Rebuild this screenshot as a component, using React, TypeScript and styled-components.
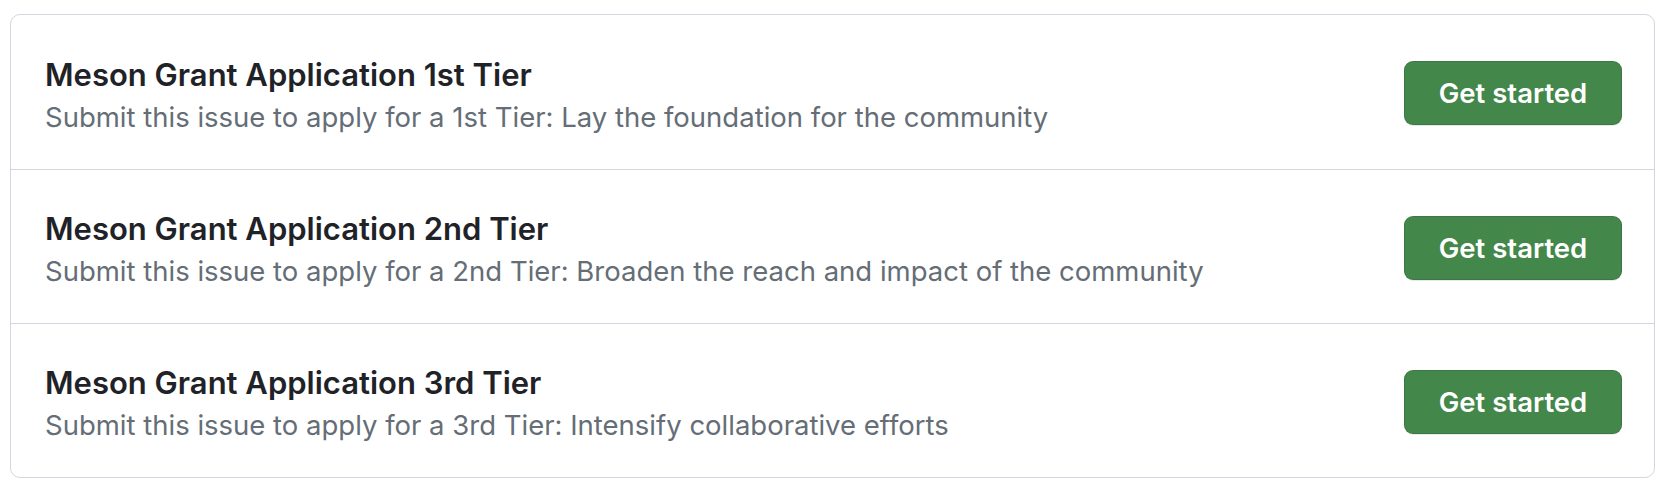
import { styled, createGlobalStyle } from 'styled-components';

const GlobalStyle = createGlobalStyle`
  body {
    margin: 0;
    background: #ffffff;
    font-family: Inter, "Liberation Sans", Arial, sans-serif;
  }
`;

interface Template {
  title: string;
  description: string;
}

const templates: Template[] = [
  {
    title: 'Meson Grant Application 1st Tier',
    description: 'Submit this issue to apply for a 1st Tier: Lay the foundation for the community',
  },
  {
    title: 'Meson Grant Application 2nd Tier',
    description:
      'Submit this issue to apply for a 2nd Tier: Broaden the reach and impact of the community',
  },
  {
    title: 'Meson Grant Application 3rd Tier',
    description: 'Submit this issue to apply for a 3rd Tier: Intensify collaborative efforts',
  },
];

const App = () => {
  return (
    <>
      <GlobalStyle />
      <StPage>
        <StList>
          {templates.map((item) => (
            <StRow key={item.title}>
              <StText>
                <StTitle>{item.title}</StTitle>
                <StDesc>{item.description}</StDesc>
              </StText>
              <StStartBtn type="button">Get started</StStartBtn>
            </StRow>
          ))}
        </StList>
      </StPage>
    </>
  );
};

export default App;

const StPage = styled.div`
  padding: 14px 17px 15px 10px;
`;

const StList = styled.div`
  display: flex;
  flex-direction: column;

  border: 1px solid #d0d7de;
  border-radius: 10px;
  background-color: #ffffff;
`;

const StRow = styled.div`
  display: flex;
  justify-content: space-between;
  align-items: center;

  height: 154px;
  padding: 0 32px 0 34px;

  box-sizing: border-box;

  & + & {
    border-top: 1px solid #d0d7de;
  }
`;

const StText = styled.div`
  display: flex;
  flex-direction: column;

  padding-top: 5px;
`;

const StTitle = styled.h3`
  margin: 0;

  color: #1f2328;
  font-size: 31px;
  font-weight: 600;
  line-height: 44px;
`;

const StDesc = styled.p`
  margin: 0;

  color: #656d76;
  font-size: 27.5px;
  font-weight: 400;
  line-height: 40px;
`;

const StStartBtn = styled.button`
  display: flex;
  justify-content: center;
  align-items: center;

  width: 218px;
  height: 64px;
  margin-top: 2px;

  border: 1px solid rgba(31, 35, 40, 0.15);
  border-radius: 9px;
  background-color: #43874a;
  box-shadow: 0 1px 0 rgba(31, 35, 40, 0.1);
  color: #ffffff;
  font-family: Inter, "Liberation Sans", Arial, sans-serif;
  font-size: 27.5px;
  font-weight: 600;
  cursor: pointer;
`;
